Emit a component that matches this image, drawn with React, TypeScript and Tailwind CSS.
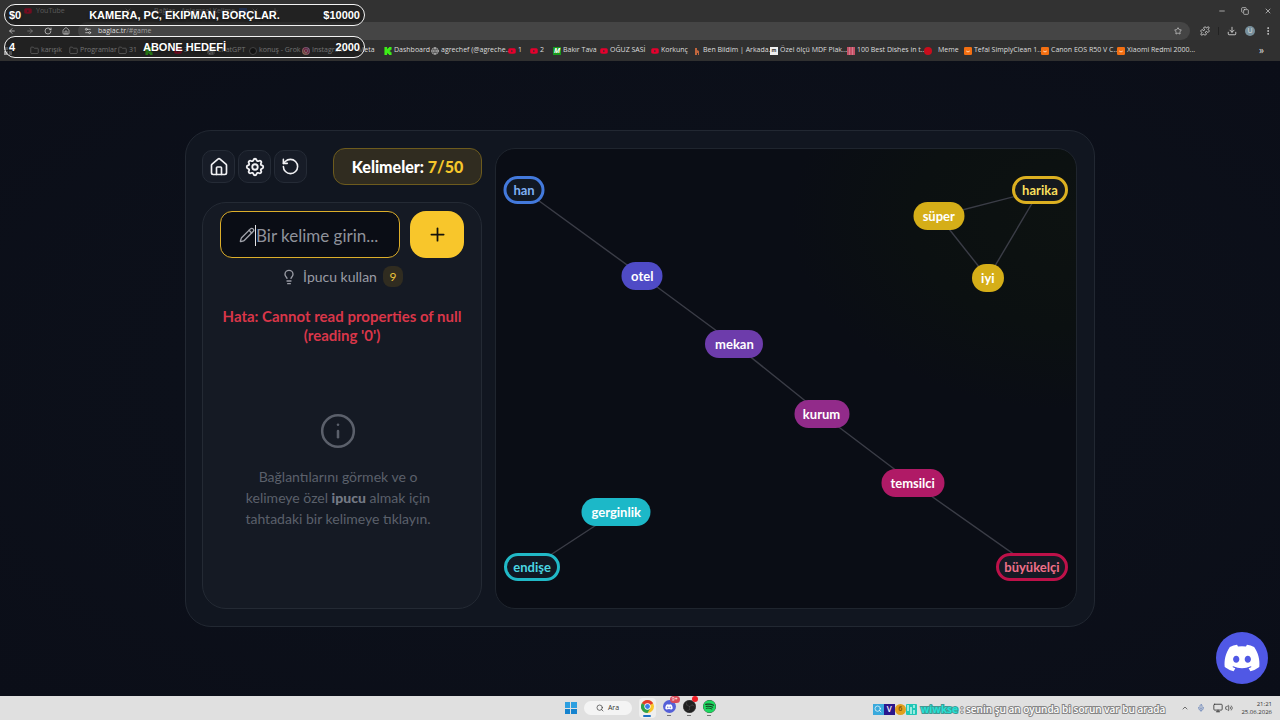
import type { ReactNode } from 'react'
import {
    ArrowLeft, ArrowRight, ChevronUp, Copy, Download, EllipsisVertical, Folder, Globe, House, Info, Lightbulb,
    Mic, Minus, Monitor, Pencil, Plus, Puzzle, RotateCcw, RotateCw, Search, Settings2, Star, Volume2, X,
} from 'lucide-react'
import { FaDiscord, FaInstagram, FaSpotify, FaYoutube } from 'react-icons/fa'
import { SiKick, SiObsstudio, SiOpenai } from 'react-icons/si'
import { TbSettings } from 'react-icons/tb'

const youtube = <FaYoutube className="size-2 shrink-0 text-[#e5002d]" />
const folder = <Folder className="size-[9px] shrink-0 text-[#b5b5b5]" />
const kick = <SiKick className="size-2 shrink-0 text-[#3ded18]" />
const orange = (
    <svg viewBox="0 0 9 9" className="size-2 shrink-0">
        <rect width="9" height="9" rx="1.5" fill="#f36f12" />
        <path d="M2.5 4.5q2 2.2 4 0" stroke="#ffe0c4" strokeWidth="1" fill="none" />
    </svg>
)

type Bookmark = { label: string; icon?: ReactNode; width: string }

const bookmarks: Bookmark[] = [
    { label: '', icon: <span className="grid size-2 grid-cols-2 gap-px"><i className="bg-[#999]" /><i className="bg-[#999]" /><i className="bg-[#999]" /><i className="bg-[#999]" /></span>, width: 'w-[26px]' },
    { label: 'karışık', icon: folder, width: 'w-[39px]' },
    { label: 'Programlar', icon: folder, width: 'w-[49px]' },
    { label: '31', icon: folder, width: 'w-[27px]' },
    { label: '', icon: kick, width: 'w-[29px]' },
    { label: '3', icon: youtube, width: 'w-[33px]' },
    { label: 'ChatGPT', icon: <SiOpenai className="size-2 shrink-0 rounded-sm bg-[#ddd] text-[#222]" />, width: 'w-[42px]' },
    { label: 'konuş - Grok', icon: <span className="size-2 shrink-0 rounded-full border border-[#777] bg-[#111]" />, width: 'w-[53px]' },
    { label: 'Instagram', icon: <FaInstagram className="size-2 shrink-0 rounded-sm bg-linear-to-tr from-[#f9a03f] via-[#e1306c] to-[#8a3ab9] text-white" />, width: 'w-[56px]' },
    { label: 'Meta', width: 'w-[26px]' },
    { label: 'Dashboard', icon: kick, width: 'w-[47px]' },
    { label: 'agrechef (@agreche...', icon: <Globe className="size-2 shrink-0 text-[#ccc]" />, width: 'w-[77px]' },
    { label: '1', icon: youtube, width: 'w-[22px]' },
    { label: '2', icon: youtube, width: 'w-[23px]' },
    { label: 'Bakır Tava', icon: <span className="grid size-2 shrink-0 place-items-center bg-[#189a1c] text-[7px] leading-none font-bold text-white italic">M</span>, width: 'w-[47px]' },
    { label: 'OĞUZ SASİ', icon: youtube, width: 'w-[51px]' },
    { label: 'Korkunç', icon: youtube, width: 'w-[42px]' },
    { label: 'Ben Bildim | Arkada...', icon: <svg viewBox="0 0 8 8" className="size-2 shrink-0"><path d="M2 1h2v2l2 1v4H5V6H4v2H2z" fill="#c2663d" /></svg>, width: 'w-[77px]' },
    { label: 'Özel ölçü MDF Plak...', icon: <span className="grid size-2 shrink-0 place-items-center bg-[#eee] text-[5px] leading-none font-bold text-[#333]">m</span>, width: 'w-[77px]' },
    { label: '100 Best Dishes in t...', icon: <svg viewBox="0 0 8 8" className="size-2 shrink-0"><rect width="8" height="8" fill="#e8c6cb" /><path d="M0 1h8M0 3h8M0 5h8M0 7h8M1 0v8M4 0v8M7 0v8" stroke="#b5203d" strokeWidth="0.9" /></svg>, width: 'w-[77px]' },
    { label: 'Meme', icon: <span className="mr-1 size-2 shrink-0 rounded-full bg-[#c80d1c]" />, width: 'w-[40px]' },
    { label: 'Tefal SimplyClean 1...', icon: orange, width: 'w-[77px]' },
    { label: 'Canon EOS R50 V C...', icon: orange, width: 'w-[76px]' },
    { label: 'Xiaomi Redmi 2000...', icon: orange, width: 'w-[77px]' },
]

// Centre of each word on the board, in a 579 x 459 space
const BOARD_W = 579
const BOARD_H = 459

const words = [
    { id: 'han', x: 28, y: 41, style: 'w-[41px] border-[3px] border-[#4379dc] bg-[#111823] text-[#7fb0f3]' },
    { id: 'otel', x: 146, y: 127, style: 'w-[41px] bg-[#4f4bc6] text-white' },
    { id: 'mekan', x: 238, y: 195, style: 'w-[58px] bg-[#6d3cab] text-white' },
    { id: 'kurum', x: 325, y: 265, style: 'w-[55px] bg-[#922b8a] text-white' },
    { id: 'temsilci', x: 416, y: 334, style: 'w-[63px] bg-[#b01a66] text-white' },
    { id: 'büyükelçi', x: 535, y: 418, style: 'w-[72px] border-[3px] border-[#bd1149] bg-[#151a25] text-[#ef7089]' },
    { id: 'gerginlik', x: 120, y: 363, style: 'w-[69px] bg-[#1cb8c8] text-white' },
    { id: 'endişe', x: 36, y: 418, style: 'w-[56px] border-[3px] border-[#21b9c7] bg-[#111823] text-[#4bd6e2]' },
    { id: 'süper', x: 442, y: 67, style: 'w-[51px] bg-[#d5ae18] text-white' },
    { id: 'harika', x: 543, y: 41, style: 'w-[56px] border-[3px] border-[#dcb021] bg-[#15191e] text-[#f8df5c]' },
    { id: 'iyi', x: 491, y: 129, style: 'w-[32px] bg-[#d5ae18] text-white' },
]

const links = [
    ['han', 'otel'],
    ['otel', 'mekan'],
    ['mekan', 'kurum'],
    ['kurum', 'temsilci'],
    ['temsilci', 'büyükelçi'],
    ['gerginlik', 'endişe'],
    ['süper', 'harika'],
    ['süper', 'iyi'],
    ['harika', 'iyi'],
]

const left = (x: number) => `${(x / BOARD_W) * 100}%`
const top = (y: number) => `${(y / BOARD_H) * 100}%`
const find = (id: string) => words.find((w) => w.id === id)!

function Browser() {
    return (
        <header className="shrink-0 overflow-hidden bg-[#323232] font-['Open_Sans','Noto_Sans',sans-serif] text-[7px] text-[#dedede]">
            <div className="flex h-[22px] items-center pr-2 pl-6 whitespace-nowrap">
                <div className="flex w-[130px] items-center gap-1 text-[#aaa]">
                    {youtube}
                    <span className="grow">YouTube</span>
                    <X className="mr-[22px] size-2" />
                </div>
                <div className="flex grow items-center gap-1 text-[#aaa]">
                    <span>Bağlaç - Anlamsal Kelime</span>
                    <span className="h-1.5 w-2 bg-[#2c4a8c]" />
                    <X className="size-2" />
                    <Plus className="ml-2 size-2" />
                </div>
                <div className="flex items-center gap-[15px]">
                    <button aria-label="Simge durumuna küçült"><Minus className="size-2" /></button>
                    <button aria-label="Aşağı geri getir"><Copy className="size-2" /></button>
                    <button aria-label="Kapat"><X className="size-2" /></button>
                </div>
            </div>
            <div className="flex h-[18px] items-center pl-2">
                <nav className="flex w-[70px] gap-2.5">
                    <button aria-label="Geri"><ArrowLeft className="size-2" /></button>
                    <button aria-label="İleri" className="text-[#888]"><ArrowRight className="size-2" /></button>
                    <button aria-label="Yenile"><RotateCw className="size-2" /></button>
                    <button aria-label="Ana sayfa"><House className="size-2" /></button>
                </nav>
                <div className="flex h-full grow items-center gap-1.5 rounded-full bg-[#454545] pr-2 pl-1.5">
                    <Settings2 className="size-2" />
                    <a href="#game" className="grow">baglac.tr<span className="text-[#a0a0a0]">/#game</span></a>
                    <Star className="size-2" />
                </div>
                <div className="flex items-center gap-2 pr-[7px] pl-2.5">
                    <Puzzle className="size-2.5" />
                    <span className="h-2 w-px bg-[#222]" />
                    <Download className="size-2.5" />
                    <span className="flex size-2.5 items-center justify-center rounded-full bg-[#78909c]">U</span>
                    <EllipsisVertical className="size-2.5" />
                </div>
            </div>
            <div className="flex h-[21px] items-center bg-[#303030] pl-1 whitespace-nowrap">
                {bookmarks.map((b, i) => (
                    <a key={i} href="#game" className={`flex shrink-0 items-center gap-0.5 ${b.width}`}>
                        {b.icon}
                        {b.label}
                    </a>
                ))}
                <span className="ml-auto pr-4 text-[10px]">»</span>
            </div>
        </header>
    )
}

function GoalBar({ now, title, goal }: { now: string; title: string; goal: string }) {
    return (
        <div className="grid h-[22px] grid-cols-[1fr_auto_1fr] items-center rounded-full border border-[#f2f2f2] bg-[#161616]/55 px-1 text-[11px] font-bold text-white text-shadow-md">
            <span>{now}</span>
            <span>{title}</span>
            <span className="text-right">{goal}</span>
        </div>
    )
}

function IconButton({ label, children }: { label: string; children: ReactNode }) {
    return (
        <button aria-label={label} className="flex size-[33px] items-center justify-center rounded-[10px] border border-[#252b36] bg-[#171c27] text-[#f1f1f4]">
            {children}
        </button>
    )
}

function Sidebar() {
    return (
        <aside className="flex w-[280px] shrink-0 flex-col gap-[17px]">
            <div className="flex items-center justify-between">
                <div className="flex gap-[3px]">
                    <IconButton label="Ana sayfa"><House className="size-5" /></IconButton>
                    <IconButton label="Ayarlar"><TbSettings className="size-[22px]" /></IconButton>
                    <IconButton label="Yeniden başlat"><RotateCcw className="size-[19px]" /></IconButton>
                </div>
                <div className="flex h-[37px] w-[149px] items-center justify-center rounded-xl border border-[#6d5b1d] bg-[#302c20] text-base font-black whitespace-pre text-white">
                    Kelimeler: <span className="text-[#f5c62b]">7/50</span>
                </div>
            </div>

            <div className="flex grow flex-col rounded-[24px] border border-[#242a34] bg-[#151a24] px-[17px] pt-2">
                <form className="flex gap-2.5" onSubmit={(e) => e.preventDefault()}>
                    <div className="relative grow">
                        <Pencil className="absolute top-4 left-[19px] size-4 text-[#a1a3ab]" />
                        <input
                            aria-label="Kelime"
                            placeholder="Bir kelime girin..."
                            className="h-[47px] w-full rounded-xl border border-[#dcae2a] bg-[#0a0d15] pt-0.5 pl-[35px] text-[17px] text-white outline-none placeholder:text-[#8f929b]"
                        />
                        <span className="absolute top-3.5 left-[35px] h-[21px] w-px bg-[#e3e3e6]" />
                    </div>
                    <button aria-label="Ekle" className="flex h-[47px] w-[54px] shrink-0 items-center justify-center rounded-2xl bg-[#f8c62b] text-[#15130c]">
                        <Plus className="size-[21px]" />
                    </button>
                </form>

                <button className="mt-2 flex h-[21px] items-center justify-center gap-1.5 text-sm text-[#9a9ca5]">
                    <Lightbulb className="size-4" />
                    İpucu kullan
                    <span className="flex h-[21px] w-5 items-center justify-center rounded-lg bg-[#302c20] text-xs text-[#e9c23a]">9</span>
                </button>

                <p className="mt-5 text-center text-[15px] leading-[19px] font-bold text-[#d93649]">
                    Hata: Cannot read properties of null (reading '0')
                </p>

                <div className="flex grow flex-col items-center justify-center gap-4 pr-2 pb-3 text-[#5b606b]">
                    <Info className="size-[38px]" strokeWidth={1.6} />
                    <p className="w-[200px] text-center text-sm leading-[21px]">
                        Bağlantılarını görmek ve o kelimeye özel <strong className="font-black text-[#747984]">ipucu</strong> almak için tahtadaki bir kelimeye tıklayın.
                    </p>
                </div>
            </div>
        </aside>
    )
}

function Board() {
    return (
        <section className="relative grow overflow-hidden rounded-[20px] border border-[#1f252e] bg-[#0a0d15] bg-radial-[at_100%_15%] from-[#0d1211] via-[#0b1011] via-20% to-[#0a0d15] to-35%">
            <svg className="absolute inset-0 size-full">
                {links.map(([from, to]) => {
                    const a = find(from)
                    const b = find(to)
                    return <line key={from + to} x1={left(a.x)} y1={top(a.y)} x2={left(b.x)} y2={top(b.y)} stroke="#3b3d47" strokeWidth="1.4" />
                })}
            </svg>
            {words.map((w) => (
                <button
                    key={w.id}
                    className={`absolute flex h-7 -translate-x-1/2 -translate-y-1/2 items-center justify-center rounded-[14px] pt-0.5 text-[13px] font-bold ${w.style}`}
                    style={{ left: left(w.x), top: top(w.y) }}
                >
                    {w.id}
                </button>
            ))}
        </section>
    )
}

function Taskbar() {
    return (
        <footer className="flex h-6 shrink-0 items-center bg-[#e0e0e0] font-['Open_Sans','Noto_Sans',sans-serif] text-[#333]">
            <div className="flex-1 pl-2" />
            <div className="flex items-center gap-[7px]">
                <button aria-label="Başlat" className="grid size-3 grid-cols-2 gap-px">
                    <i className="bg-[#2d9fe0]" /><i className="bg-[#2d9fe0]" /><i className="bg-[#1583cf]" /><i className="bg-[#1583cf]" />
                </button>
                <button className="flex h-3.5 w-12 items-center justify-center gap-1 rounded-full bg-[#f4f4f4] text-[7px]">
                    <Search className="size-2" />
                    Ara
                </button>
                <button aria-label="Chrome" className="flex h-5 flex-col items-center justify-center gap-0.5 rounded-sm bg-[#efefef] px-0.5">
                    <svg viewBox="0 0 24 24" className="size-[13px]">
                        <circle cx="12" cy="12" r="12" fill="#f9c52b" />
                        <path d="M12 12 1.6 6A12 12 0 0 1 22.4 6z" fill="#e33b2e" />
                        <path d="M12 12 1.6 6A12 12 0 0 0 12 24l5-9z" fill="#2ba24c" />
                        <circle cx="12" cy="12" r="5.8" fill="#fff" />
                        <circle cx="12" cy="12" r="4.5" fill="#3b7de8" />
                    </svg>
                    <i className="h-0.5 w-2 rounded bg-[#1a70c5]" />
                </button>
                <button aria-label="Discord" className="relative flex flex-col items-center gap-0.5">
                    <span className="flex size-[13px] items-center justify-center rounded-full bg-[#5560d8] text-white"><FaDiscord className="size-2" /></span>
                    <span className="absolute -top-1 -right-1 flex h-[7px] items-center rounded-full bg-[#d84a59] px-0.5 text-[5px] text-white">9+</span>
                    <i className="h-px w-1 bg-[#777]" />
                </button>
                <button aria-label="OBS" className="relative flex flex-col items-center gap-0.5">
                    <SiObsstudio className="size-[13px] rounded-full bg-[#202020] text-[#4a4a4a]" />
                    <span className="absolute -top-1 -right-0.5 size-1.5 rounded-full bg-[#ee1c25]" />
                    <i className="h-px w-1 bg-[#777]" />
                </button>
                <button aria-label="Spotify" className="flex flex-col items-center gap-0.5">
                    <FaSpotify className="size-[13px] rounded-full bg-[#173d22] text-[#1ed760]" />
                    <i className="h-px w-1 bg-[#777]" />
                </button>
            </div>
            <div className="flex flex-1 items-center justify-end pr-2">
                <p className="mt-0.5 mr-4 flex items-center text-[10px] font-semibold whitespace-pre">
                    <span className="mr-1 flex">
                        <span className="flex size-[11px] items-center justify-center bg-[#39a9dc] text-white"><Search className="size-2" /></span>
                        <span className="flex size-[11px] items-center justify-center bg-[#2a168c] text-[8px] text-white">V</span>
                        <span className="flex size-[11px] items-center justify-center rounded-full bg-[#e1a01d] text-[7px] text-[#7a4d06]">6</span>
                        <svg viewBox="0 0 11 11" className="size-[11px]"><rect width="11" height="11" rx="1" fill="#1fc6b6" /><path d="M2 1v6M5 3v7M8 1v3M8 6v4" stroke="#d8fff7" strokeWidth="1.3" /></svg>
                    </span>
                    <span className="font-bold text-[#24e0d4] [paint-order:stroke] [-webkit-text-stroke:2px_#3d9a94]">wiwkse</span>
                    <span className="text-white [paint-order:stroke] [-webkit-text-stroke:2px_#858585]"> : senin şu an oyunda bi sorun var bu arada</span>
                </p>
                <ChevronUp className="mr-2 size-2" />
                <Mic className="mr-2 size-2 text-[#4f6fb0]" />
                <Monitor className="mr-0.5 size-2.5" />
                <Volume2 className="mr-2 size-2" />
                <div className="text-right text-[6px] leading-2">
                    <div>21:21</div>
                    <div>25.06.2026</div>
                </div>
            </div>
        </footer>
    )
}

export default function App() {
    return (
        <div className="relative flex min-h-screen flex-col bg-[#0a0d16]">
            <Browser />

            <div className="absolute top-1 left-1 flex w-[361px] flex-col gap-2.5 font-['Liberation_Sans',Arial,sans-serif]">
                <GoalBar now="$0" title="KAMERA, PC, EKIPMAN, BORÇLAR." goal="$10000" />
                <GoalBar now="4" title="ABONE HEDEFİ" goal="2000" />
            </div>

            <main className="relative flex grow items-center justify-center bg-radial from-[#0d121c] to-[#0b0e18] px-6 py-8 font-[Lato,sans-serif]">
                <div className="flex min-h-[497px] w-full max-w-[910px] gap-[13px] rounded-[26px] border border-[#222832] bg-[#111620] py-[17px] pr-[17px] pl-4">
                    <Sidebar />
                    <Board />
                </div>
                <a href="#discord" aria-label="Discord" className="absolute right-3 bottom-3 flex size-[52px] items-center justify-center rounded-full bg-[#5058e5] text-white">
                    <FaDiscord className="size-[38px]" />
                </a>
            </main>

            <Taskbar />
        </div>
    )
}
